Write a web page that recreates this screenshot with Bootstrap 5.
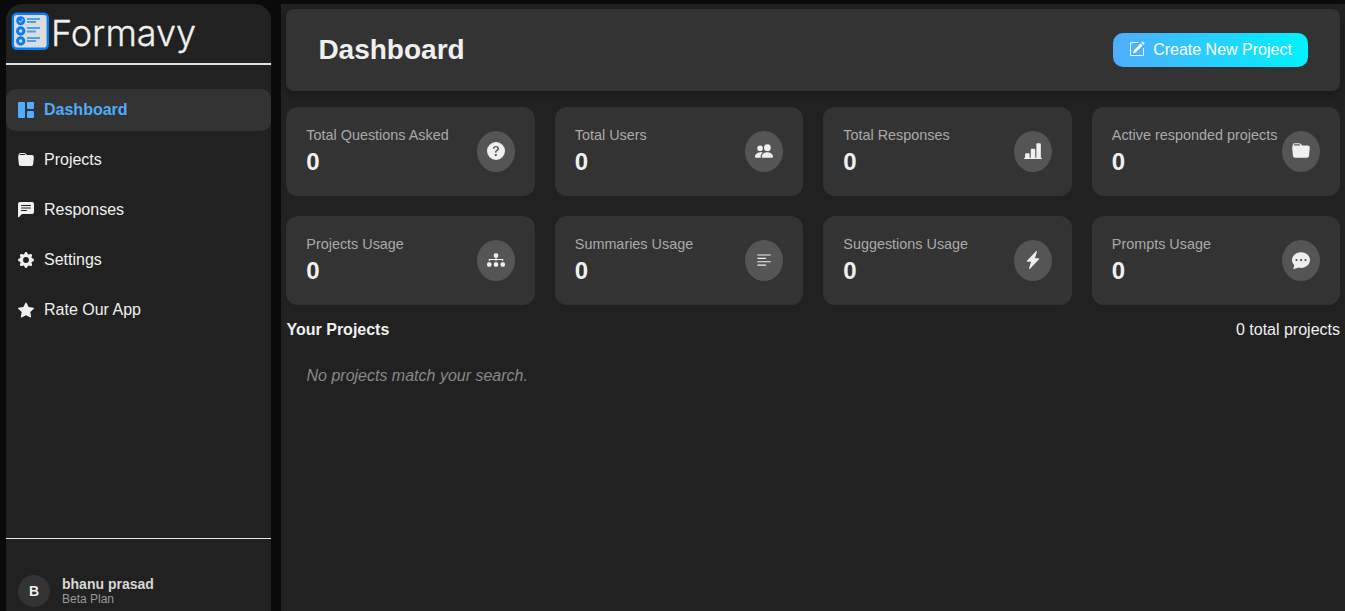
<!DOCTYPE html>
<html lang="en">
<head>
<meta charset="utf-8">
<title>Formavy</title>
<link href="https://cdn.jsdelivr.net/npm/bootstrap@5.3.0/dist/css/bootstrap.min.css" rel="stylesheet">
<style>
html,body{height:100%}
body{background:#0a0a0a;font-family:"Liberation Sans",Arial,sans-serif;color:#f0f0f0;overflow:hidden}
.app-shell{height:611px;padding:4px 0 0 6px;gap:10px}
.side-panel{width:265px;background:#212121;border-radius:16px 16px 0 0;flex:none}
.brand-row{height:61px;border-bottom:2px solid #e0e0e0;padding:8px 0 0 5px;gap:1px}
.brand-name{font-family:Inter,"Liberation Sans",sans-serif;font-weight:300;font-size:36px;line-height:43px;color:#f0f0f0;-webkit-text-stroke:.3px #f0f0f0}
.side-nav{padding-top:24px;gap:8px}
.side-link{height:42px;padding:0 12px;gap:10px;border-radius:10px;color:#f0f0f0;font-size:16px;text-decoration:none}
.side-link svg{width:16px;height:16px;flex:none;fill:currentColor}
.side-link.is-active{background:#333;color:#4facfe;font-weight:700}
.side-foot{border-top:1px solid #e8e8e8;height:73px;padding:36px 0 0 12px;gap:12px}
.user-dot{width:32px;height:32px;border-radius:50%;background:#333;font-size:14px;font-weight:700}
.user-meta{padding-top:1px}
.user-name{font-size:14px;font-weight:700;line-height:16px;color:#d8d8d8}
.user-plan{font-size:12px;line-height:14px;color:#9a9a9a}
.main-pane{background:#212121;padding:5px 5px 0 5px;min-width:0}
.head-card{height:82px;background:#333;border-radius:8px;padding:0 32px 0 32.4px;box-shadow:0 2px 8px rgba(0,0,0,.3);margin-bottom:16px}
.head-title{font-size:28px;font-weight:700;line-height:34px;margin:0;color:#f0f0f0}
.new-btn{width:195px;height:34px;border:0;border-radius:10px;color:#fff;font-size:16px;gap:8px;background:linear-gradient(90deg,#4facfe,#00f2fe);padding:0}
.new-btn svg{width:16px;height:16px;fill:currentColor;margin-bottom:2px}
.stat-grid{display:grid;grid-template-columns:repeat(4,1fr);gap:20px}
.stat-box{height:89px;background:#333;border-radius:12px;padding:0 20px 0 20.3px}
.stat-label{font-size:14.4px;line-height:17px;color:#aaa;white-space:nowrap}
.stat-num{font-size:24px;font-weight:700;line-height:29px;color:#f0f0f0;margin-top:3px}
.stat-round{width:38px;height:41px;border-radius:50%;background:#555;flex:none;color:#f0f0f0}
.stat-round svg{width:18px;height:18px;fill:currentColor;margin-bottom:2px}
.proj-head{font-size:16px;line-height:19px;margin-top:15px;padding-left:.5px}
.proj-empty{font-style:italic;color:#888;font-size:16px;padding:27px 0 0 20.5px;line-height:19px}
</style>
</head>
<body>
<div class="app-shell d-flex">
  <aside class="side-panel d-flex flex-column">
    <div class="brand-row d-flex align-items-start">
      <svg width="39" height="39" viewBox="0 0 39 39" class="flex-shrink-0">
        <rect x="1.800" y="1.800" width="35" height="35" rx="4" fill="#dcdcdc" stroke="#0a7cf5" stroke-width="2.400"/>
        <circle cx="9.700" cy="8.700" r="4.500" fill="#0a7cf5"/><path d="M7.700 8.700l1.600 1.600L12.200 7" fill="none" stroke="#dcdcdc" stroke-width="1"/>
        <circle cx="9.700" cy="19" r="3.200" fill="#dcdcdc" stroke="#0a7cf5" stroke-width="3"/>
        <circle cx="9.700" cy="29" r="3.200" fill="#dcdcdc" stroke="#0a7cf5" stroke-width="3"/>
        <path d="M16 7h13M16 10h9M16 16h13M16 19.500h9M16 26h13M16 29h9" stroke="#4aa0f5" stroke-width="1.900"/>
      </svg>
      <span class="brand-name">Formavy</span>
    </div>
    <nav class="side-nav d-flex flex-column flex-grow-1">
      <a class="side-link is-active d-flex align-items-center" href="#"><svg viewBox="0 0 16 16"><path d="M0 1a1 1 0 0 1 1-1h5a1 1 0 0 1 1 1v14a1 1 0 0 1-1 1H1a1 1 0 0 1-1-1V1zm9 0a1 1 0 0 1 1-1h5a1 1 0 0 1 1 1v5a1 1 0 0 1-1 1h-5a1 1 0 0 1-1-1V1zm0 9a1 1 0 0 1 1-1h5a1 1 0 0 1 1 1v5a1 1 0 0 1-1 1h-5a1 1 0 0 1-1-1v-5z"/></svg>Dashboard</a>
      <a class="side-link d-flex align-items-center" href="#"><svg viewBox="0 0 16 16"><path d="M9.828 3h3.982a2 2 0 0 1 1.992 2.181l-.637 7A2 2 0 0 1 13.174 14H2.825a2 2 0 0 1-1.991-1.819l-.637-7a1.990 1.990 0 0 1 .342-1.310L.5 3a2 2 0 0 1 2-2h3.672a2 2 0 0 1 1.414.586l.828.828A2 2 0 0 0 9.828 3zm-8.322.12C1.720 3.042 1.950 3 2.190 3h5.396l-.707-.707A1 1 0 0 0 6.172 2H2.500a1 1 0 0 0-1 .981l.006.139z"/></svg>Projects</a>
      <a class="side-link d-flex align-items-center" href="#"><svg viewBox="0 0 16 16"><path d="M0 2a2 2 0 0 1 2-2h12a2 2 0 0 1 2 2v8a2 2 0 0 1-2 2H4.414a1 1 0 0 0-.707.293L.854 15.146A.5.5 0 0 1 0 14.793V2zm3.500 1a.5.5 0 0 0 0 1h9a.5.5 0 0 0 0-1h-9zm0 2.500a.5.5 0 0 0 0 1h9a.5.5 0 0 0 0-1h-9zm0 2.500a.5.5 0 0 0 0 1h5a.5.5 0 0 0 0-1h-5z"/></svg>Responses</a>
      <a class="side-link d-flex align-items-center" href="#"><svg viewBox="0 0 16 16"><path d="M9.405 1.050c-.413-1.400-2.397-1.400-2.810 0l-.1.340a1.464 1.464 0 0 1-2.105.872l-.310-.170c-1.283-.698-2.686.705-1.987 1.987l.169.311c.446.820.023 1.841-.872 2.105l-.340.1c-1.400.413-1.400 2.397 0 2.810l.340.1a1.464 1.464 0 0 1 .872 2.105l-.170.310c-.698 1.283.705 2.686 1.987 1.987l.311-.169a1.464 1.464 0 0 1 2.105.872l.1.340c.413 1.400 2.397 1.400 2.810 0l.1-.340a1.464 1.464 0 0 1 2.105-.872l.310.170c1.283.698 2.686-.705 1.987-1.987l-.169-.311a1.464 1.464 0 0 1 .872-2.105l.340-.1c1.400-.413 1.400-2.397 0-2.810l-.340-.1a1.464 1.464 0 0 1-.872-2.105l.170-.310c.698-1.283-.705-2.686-1.987-1.987l-.311.169a1.464 1.464 0 0 1-2.105-.872l-.1-.340zM8 10.930a2.929 2.929 0 1 1 0-5.860 2.929 2.929 0 0 1 0 5.858z"/></svg>Settings</a>
      <a class="side-link d-flex align-items-center" href="#"><svg viewBox="0 0 16 16"><path d="M3.612 15.443c-.386.198-.824-.149-.746-.592l.830-4.730L.173 6.765c-.329-.314-.158-.888.283-.950l4.898-.696L7.538.792c.197-.390.730-.390.927 0l2.184 4.327 4.898.696c.441.062.612.636.282.950l-3.522 3.356.830 4.730c.078.443-.360.790-.746.592L8 13.187l-4.389 2.256z"/></svg>Rate Our App</a>
    </nav>
    <div class="side-foot d-flex align-items-start">
      <div class="user-dot d-flex align-items-center justify-content-center">B</div>
      <div class="user-meta d-flex flex-column"><span class="user-name">bhanu prasad</span><span class="user-plan">Beta Plan</span></div>
    </div>
  </aside>
  <main class="main-pane flex-grow-1">
    <header class="head-card d-flex align-items-center justify-content-between">
      <h1 class="head-title">Dashboard</h1>
      <button class="new-btn d-flex align-items-center justify-content-center" type="button">
        <svg viewBox="0 0 16 16"><path d="M15.502 1.940a.5.5 0 0 1 0 .706L14.459 3.690l-2-2L13.502.646a.5.5 0 0 1 .707 0l1.293 1.293zm-1.750 2.456-2-2L4.939 9.210a.5.5 0 0 0-.121.196l-.805 2.414a.25.25 0 0 0 .316.316l2.414-.805a.5.5 0 0 0 .196-.120l6.813-6.814z"/><path fill-rule="evenodd" d="M1 13.500A1.500 1.500 0 0 0 2.500 15h11a1.500 1.500 0 0 0 1.500-1.500v-6a.5.5 0 0 0-1 0v6a.5.5 0 0 1-.5.5h-11a.5.5 0 0 1-.5-.5v-11a.5.5 0 0 1 .5-.5H9a.5.5 0 0 0 0-1H2.500A1.500 1.500 0 0 0 1 2.500v11z"/></svg>
        Create New Project
      </button>
    </header>
    <section class="stat-grid">
      <div class="stat-box d-flex align-items-center justify-content-between"><div><div class="stat-label">Total Questions Asked</div><div class="stat-num">0</div></div>
        <div class="stat-round d-flex align-items-center justify-content-center"><svg viewBox="0 0 16 16"><path d="M16 8A8 8 0 1 1 0 8a8 8 0 0 1 16 0zM5.496 6.033h.825c.138 0 .248-.113.266-.250.090-.656.540-1.134 1.342-1.134.686 0 1.314.343 1.314 1.168 0 .635-.374.927-.965 1.371-.673.489-1.206 1.060-1.168 1.987l.003.217a.25.25 0 0 0 .25.246h.811a.25.25 0 0 0 .25-.25v-.105c0-.718.273-.927 1.010-1.486.609-.463 1.244-.977 1.244-2.056 0-1.511-1.276-2.241-2.673-2.241-1.267 0-2.655.590-2.750 2.286a.237.237 0 0 0 .241.247zm2.325 6.443c.610 0 1.029-.394 1.029-.927 0-.552-.420-.940-1.029-.940-.584 0-1.009.388-1.009.940 0 .533.425.927 1.010.927z"/></svg></div></div>
      <div class="stat-box d-flex align-items-center justify-content-between"><div><div class="stat-label">Total Users</div><div class="stat-num">0</div></div>
        <div class="stat-round d-flex align-items-center justify-content-center"><svg viewBox="0 0 16 16"><path d="M7 14s-1 0-1-1 1-4 5-4 5 3 5 4-1 1-1 1H7Zm4-6a3 3 0 1 0 0-6 3 3 0 0 0 0 6Zm-5.784 6A2.238 2.238 0 0 1 5 13c0-1.355.680-2.750 1.936-3.720A6.325 6.325 0 0 0 5 9c-4 0-5 3-5 4s1 1 1 1h4.216ZM4.500 8a2.500 2.500 0 1 0 0-5 2.500 2.500 0 0 0 0 5Z"/></svg></div></div>
      <div class="stat-box d-flex align-items-center justify-content-between"><div><div class="stat-label">Total Responses</div><div class="stat-num">0</div></div>
        <div class="stat-round d-flex align-items-center justify-content-center"><svg viewBox="0 0 16 16"><path d="M11 2a1 1 0 0 1 1-1h2a1 1 0 0 1 1 1v12h.5a.5.5 0 0 1 0 1H.5a.5.5 0 0 1 0-1H1v-3a1 1 0 0 1 1-1h2a1 1 0 0 1 1 1v3h1V7a1 1 0 0 1 1-1h2a1 1 0 0 1 1 1v7h1V2z"/></svg></div></div>
      <div class="stat-box d-flex align-items-center justify-content-between"><div><div class="stat-label">Active responded projects</div><div class="stat-num">0</div></div>
        <div class="stat-round d-flex align-items-center justify-content-center"><svg viewBox="0 0 16 16"><path d="M9.828 3h3.982a2 2 0 0 1 1.992 2.181l-.637 7A2 2 0 0 1 13.174 14H2.825a2 2 0 0 1-1.991-1.819l-.637-7a1.990 1.990 0 0 1 .342-1.310L.5 3a2 2 0 0 1 2-2h3.672a2 2 0 0 1 1.414.586l.828.828A2 2 0 0 0 9.828 3zm-8.322.12C1.720 3.042 1.950 3 2.190 3h5.396l-.707-.707A1 1 0 0 0 6.172 2H2.500a1 1 0 0 0-1 .981l.006.139z"/></svg></div></div>
      <div class="stat-box d-flex align-items-center justify-content-between"><div><div class="stat-label">Projects Usage</div><div class="stat-num">0</div></div>
        <div class="stat-round d-flex align-items-center justify-content-center"><svg viewBox="0 0 16 16"><path d="M6 3.500A1.500 1.500 0 0 1 7.500 2h1A1.500 1.500 0 0 1 10 3.500v1A1.500 1.500 0 0 1 8.500 6v1H14a.5.5 0 0 1 .5.5v1a.5.5 0 0 1-1 0V8h-5v.5a.5.5 0 0 1-1 0V8h-5v.5a.5.5 0 0 1-1 0v-1A.5.5 0 0 1 2 7h5.500V6A1.500 1.500 0 0 1 6 4.500v-1zm-6 8A1.500 1.500 0 0 1 1.500 10h1A1.500 1.500 0 0 1 4 11.500v1A1.500 1.500 0 0 1 2.500 14h-1A1.500 1.500 0 0 1 0 12.500v-1zm6 0A1.500 1.500 0 0 1 7.500 10h1a1.500 1.500 0 0 1 1.500 1.500v1A1.500 1.500 0 0 1 8.500 14h-1A1.500 1.500 0 0 1 6 12.500v-1zm6 0a1.500 1.500 0 0 1 1.500-1.500h1a1.500 1.500 0 0 1 1.500 1.500v1a1.500 1.500 0 0 1-1.500 1.500h-1a1.500 1.500 0 0 1-1.500-1.500v-1z"/></svg></div></div>
      <div class="stat-box d-flex align-items-center justify-content-between"><div><div class="stat-label">Summaries Usage</div><div class="stat-num">0</div></div>
        <div class="stat-round d-flex align-items-center justify-content-center"><svg viewBox="0 0 16 16"><path d="M2 12.500a.5.5 0 0 1 .5-.5h7a.5.5 0 0 1 0 1h-7a.5.5 0 0 1-.5-.5zm0-3a.5.5 0 0 1 .5-.5h11a.5.5 0 0 1 0 1h-11a.5.5 0 0 1-.5-.5zm0-3a.5.5 0 0 1 .5-.5h7a.5.5 0 0 1 0 1h-7a.5.5 0 0 1-.5-.5zm0-3a.5.5 0 0 1 .5-.5h11a.5.5 0 0 1 0 1h-11a.5.5 0 0 1-.5-.5z"/></svg></div></div>
      <div class="stat-box d-flex align-items-center justify-content-between"><div><div class="stat-label">Suggestions Usage</div><div class="stat-num">0</div></div>
        <div class="stat-round d-flex align-items-center justify-content-center"><svg viewBox="0 0 16 16"><path d="M11.251.068a.5.5 0 0 1 .227.580L9.677 6.500H13a.5.5 0 0 1 .364.843l-8 8.500a.5.5 0 0 1-.842-.490L6.323 9.500H3a.5.5 0 0 1-.364-.843l8-8.500a.5.5 0 0 1 .615-.090z"/></svg></div></div>
      <div class="stat-box d-flex align-items-center justify-content-between"><div><div class="stat-label">Prompts Usage</div><div class="stat-num">0</div></div>
        <div class="stat-round d-flex align-items-center justify-content-center"><svg viewBox="0 0 16 16"><path d="M16 8c0 3.866-3.582 7-8 7a9.060 9.060 0 0 1-2.347-.306c-.584.296-1.925.864-4.181 1.234-.2.032-.352-.176-.273-.362.354-.836.674-1.950.770-2.966C.744 11.370 0 9.760 0 8c0-3.866 3.582-7 8-7s8 3.134 8 7zM5 8a1 1 0 1 0-2 0 1 1 0 0 0 2 0zm4 0a1 1 0 1 0-2 0 1 1 0 0 0 2 0zm3 1a1 1 0 1 0 0-2 1 1 0 0 0 0 2z"/></svg></div></div>
    </section>
    <div class="proj-head d-flex justify-content-between"><strong>Your Projects</strong><span>0 total projects</span></div>
    <div class="proj-empty">No projects match your search.</div>
  </main>
</div>
<script src="https://cdn.jsdelivr.net/npm/bootstrap@5.3.0/dist/js/bootstrap.bundle.min.js"></script>
</body>
</html>
